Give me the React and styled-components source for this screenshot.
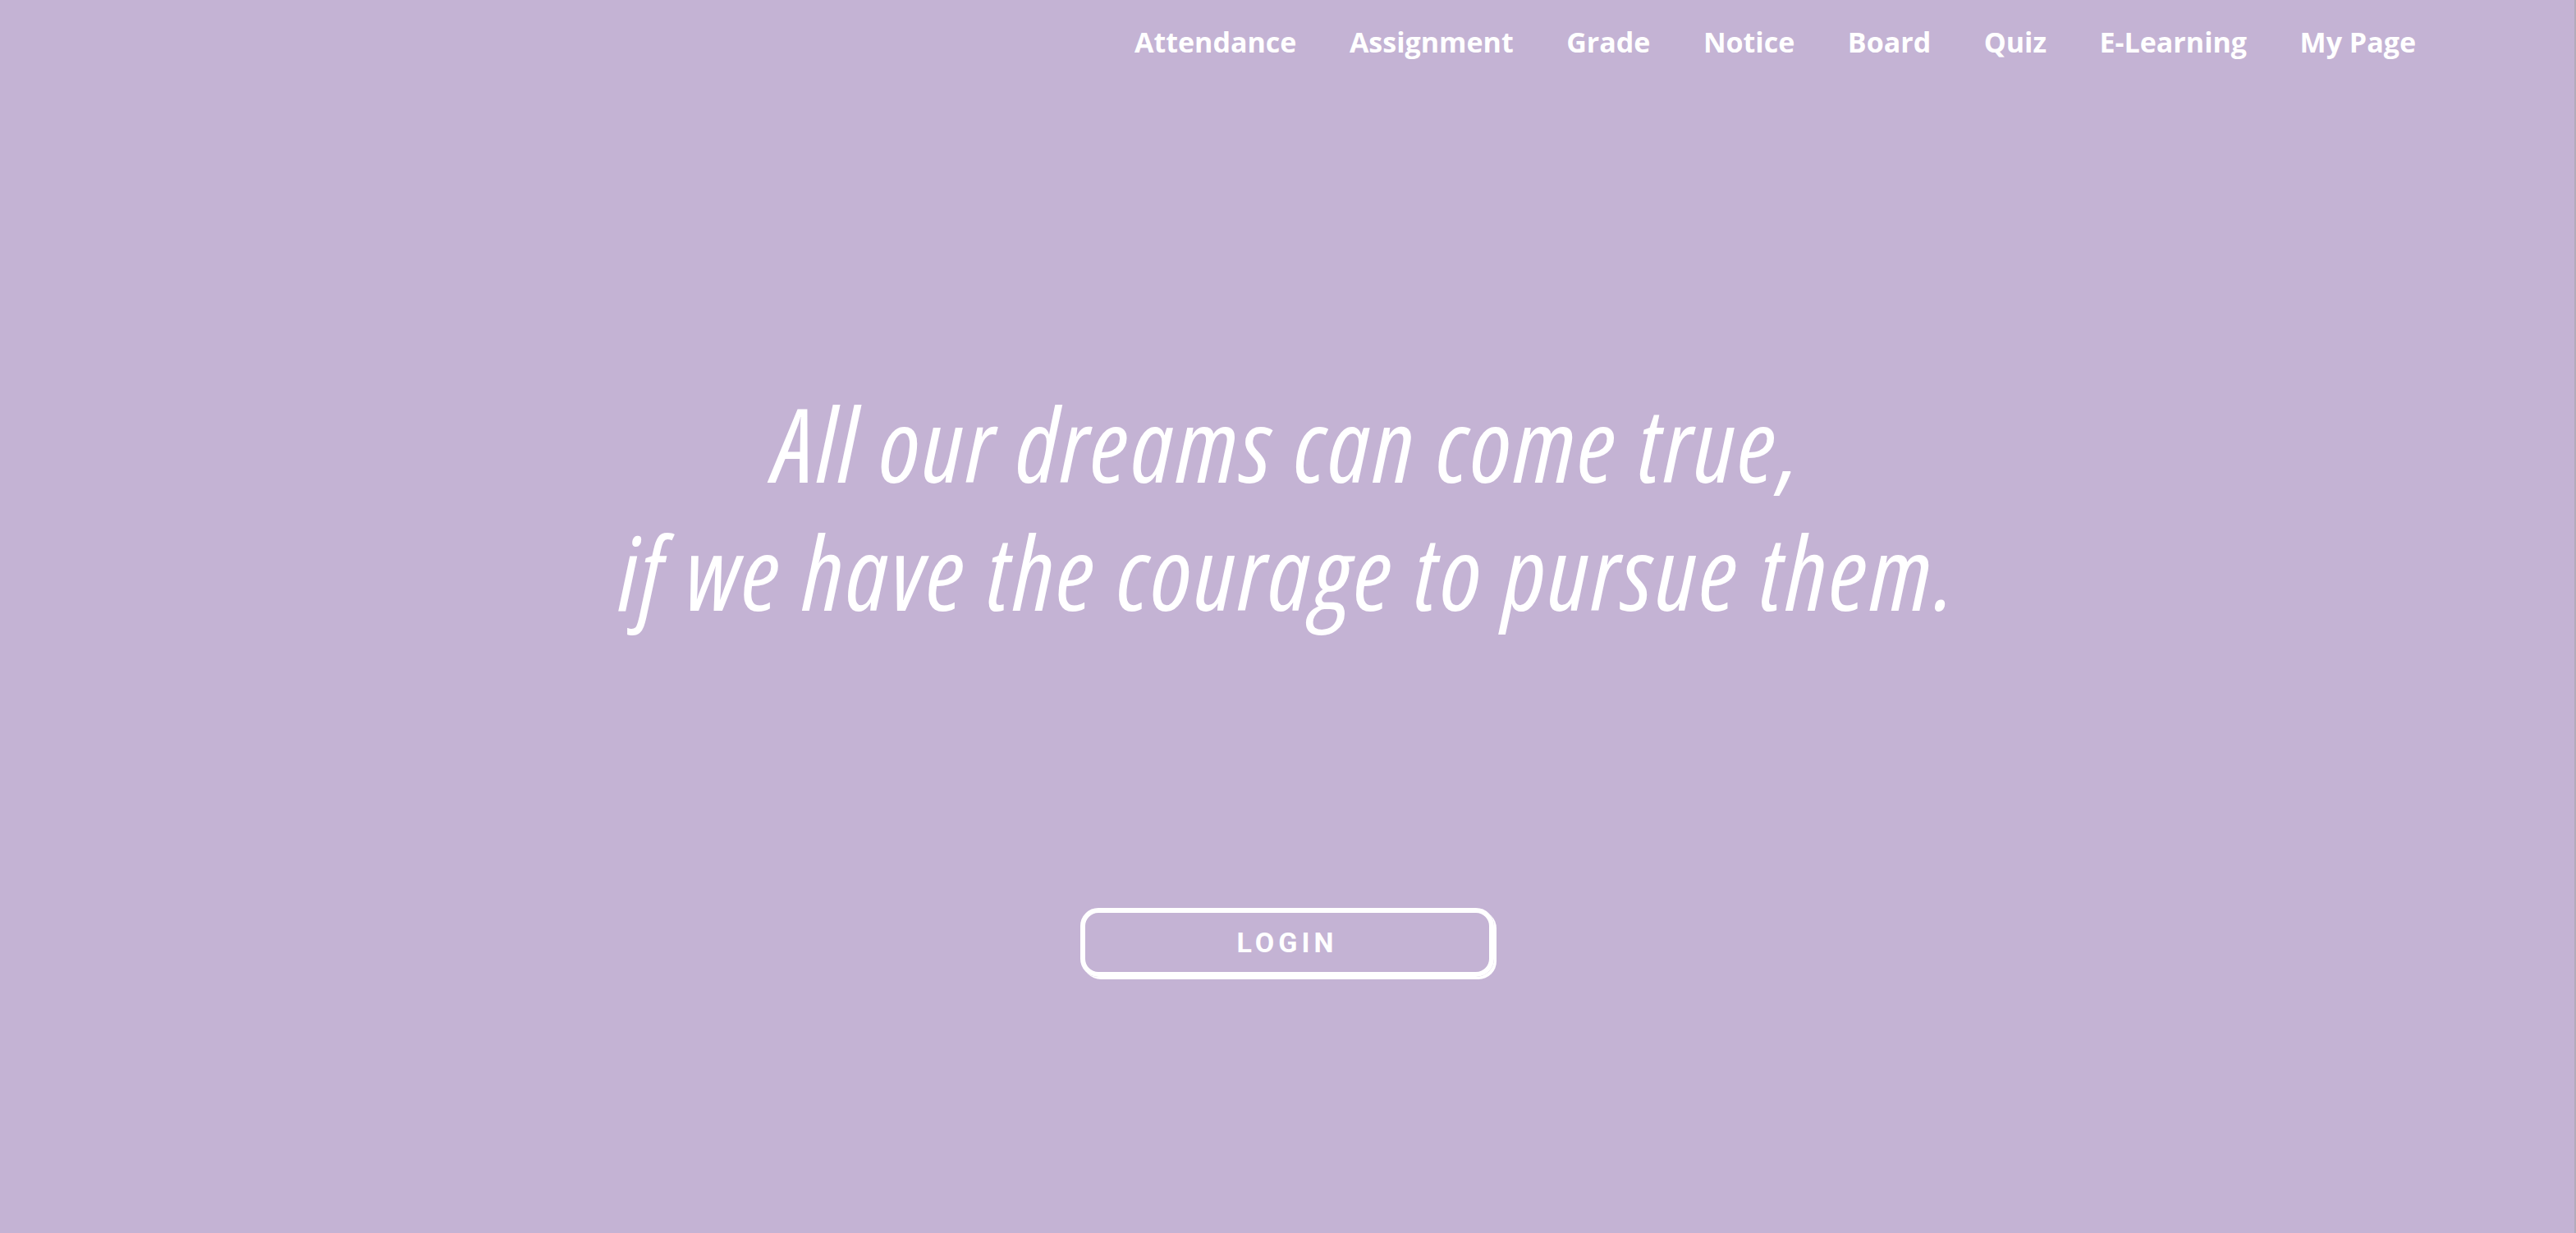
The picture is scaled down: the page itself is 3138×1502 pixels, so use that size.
import React from "react";
import styled, { createGlobalStyle } from "styled-components";

const GlobalStyle = createGlobalStyle`
  html, body {
    margin: 0;
    padding: 0;
    background: #c4b3d4;
  }
  * {
    box-sizing: border-box;
  }
`;

const Page = styled.div`
  min-height: 100vh;
  display: flex;
  flex-direction: column;
  background: #c4b3d4;
  border-right: 2px solid #b3abbb;
  color: #ffffff;
`;

const Nav = styled.nav`
  display: flex;
  justify-content: flex-end;
  align-items: center;
  height: 102px;
  padding: 0 193px 0 0;
`;

const NavItem = styled.a`
  font-family: "Open Sans", "Liberation Sans", sans-serif;
  font-weight: 700;
  font-size: 34px;
  color: #ffffff;
  text-decoration: none;
  margin-left: 64.5px;
  line-height: 1;
  cursor: pointer;
`;

const Hero = styled.section`
  display: flex;
  flex-direction: column;
  align-items: center;
  padding-top: 360px;
`;

const Quote = styled.h1`
  margin: 0;
  font-family: "Open Sans", "DejaVu Sans", sans-serif;
  font-style: italic;
  font-weight: 400;
  font-stretch: 85%;
  font-size: 124px;
  line-height: 156px;
  letter-spacing: 2.9px;
  text-align: center;
  color: #ffffff;
`;

const Line = styled.span`
  display: block;
`;

const LoginButton = styled.button`
  margin-top: 332px;
  width: 504px;
  height: 84px;
  border: 6px solid #ffffff;
  border-radius: 22px;
  background: transparent;
  box-shadow: 3px 3px 0 #ffffff;
  color: #ffffff;
  font-family: Roboto, "Liberation Sans", sans-serif;
  font-weight: 700;
  font-size: 34px;
  letter-spacing: 5px;
  cursor: pointer;
`;

const menu = [
  "Attendance",
  "Assignment",
  "Grade",
  "Notice",
  "Board",
  "Quiz",
  "E-Learning",
  "My Page"
];

const App = () => {
  return (
    <>
      <GlobalStyle />
      <Page>
        <Nav>
          {menu.map(item => (
            <NavItem key={item}>{item}</NavItem>
          ))}
        </Nav>
        <Hero>
          <Quote>
            <Line>All our dreams can come true,</Line>
            <Line>if we have the courage to pursue them.</Line>
          </Quote>
          <LoginButton>LOGIN</LoginButton>
        </Hero>
      </Page>
    </>
  );
};

export default App;
